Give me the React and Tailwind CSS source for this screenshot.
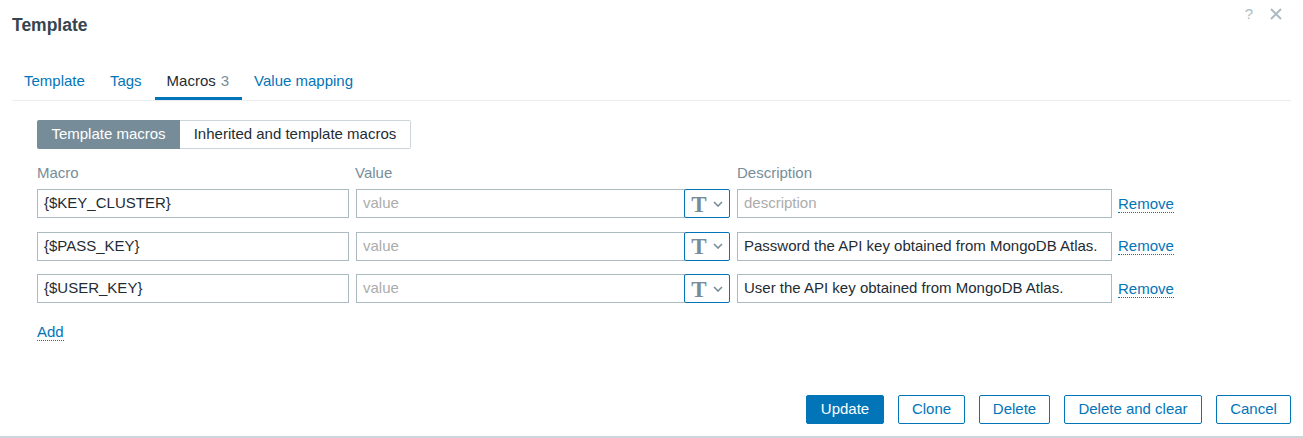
const macros = [
    { macro: '{$KEY_CLUSTER}', description: '' },
    { macro: '{$PASS_KEY}', description: 'Password the API key obtained from MongoDB Atlas.' },
    { macro: '{$USER_KEY}', description: 'User the API key obtained from MongoDB Atlas.' },
];

const tabs = [
    { label: 'Template' },
    { label: 'Tags' },
    { label: 'Macros', count: 3, active: true },
    { label: 'Value mapping' },
];

const buttons = [
    { label: 'Update', w: 'w-[78px]', primary: true },
    { label: 'Clone', w: 'w-[67px]' },
    { label: 'Delete', w: 'w-[71px]' },
    { label: 'Delete and clear', w: 'w-[138px]' },
    { label: 'Cancel', w: 'w-[75px]' },
];

const MacroRow = ({ row }) => {
    return (
        <div className="flex items-center h-[29px]">
            <div className="w-[312px] h-full border border-[#acbbc2] px-[6px] flex items-center">
                {row.macro}
            </div>

            <div className="ml-[7px] w-[329px] h-full border border-[#acbbc2] px-[6px] flex items-center text-[#acacac]">
                value
            </div>
            <button className="-ml-px w-[46px] h-full border border-[#0275b8] rounded-[2px] flex items-center justify-center gap-[6px] bg-white">
                <span className="font-['Liberation_Serif',serif] font-bold text-[23px] leading-none text-[#768d99] mt-[1px]">
                    T
                </span>
                <svg width="10" height="6" viewBox="0 0 10 6" fill="none">
                    <path d="M1 1l4 4 4-4" stroke="#768d99" strokeWidth="1.6" />
                </svg>
            </button>

            <div
                className={`ml-[7px] w-[375px] h-full border border-[#acbbc2] px-[6px] flex items-center ${
                    row.description ? '' : 'text-[#acacac]'
                }`}
            >
                {row.description || 'description'}
            </div>

            <span className="ml-[6px] text-[#0275b8] leading-[17px] border-b border-dotted border-[#0275b8] cursor-pointer">
                Remove
            </span>
        </div>
    );
};

export default function App() {
    return (
        <div className="w-[1303px] h-[438px] bg-white flex flex-col border-b-2 border-[#ccd5d9] font-['Liberation_Sans',Arial,sans-serif] text-[15px] text-[#1f2c33]">
            {/* header */}
            <div className="flex justify-between px-3">
                <h4 className="pt-[14px] font-bold text-[17.5px] leading-[22px] text-[#34454f]">Template</h4>
                <div className="flex items-start gap-[17px] pt-[6px] pr-[9px] text-[#acbbc2]">
                    <span className="text-[15px] leading-[16px]">?</span>
                    <svg width="12" height="12" viewBox="0 0 12 12" className="mt-[2px]">
                        <path d="M1 1l10 10M11 1L1 11" stroke="#acbbc2" strokeWidth="2" />
                    </svg>
                </div>
            </div>

            {/* tabs */}
            <div className="mx-3 mt-[25px] flex border-b border-[#ebeef0]">
                {tabs.map((tab) => (
                    <div
                        key={tab.label}
                        className={`h-[39px] pt-[4px] pl-3 pr-[13px] flex items-center border-b-[3px] ${
                            tab.active
                                ? 'border-[#0275b8] text-[#1f2c33]'
                                : 'border-transparent text-[#0275b8]'
                        }`}
                    >
                        {tab.label}
                        {tab.count && <span className="ml-[5px] text-[#768d99]">{tab.count}</span>}
                    </div>
                ))}
            </div>

            {/* body */}
            <div className="px-[37px] pt-[19px]">
                <div className="flex h-[29px]">
                    <div className="w-[143px] flex items-center justify-center bg-[#768d99] text-white rounded-l-[2px]">
                        Template macros
                    </div>
                    <div className="w-[231px] flex items-center justify-center border border-l-0 border-[#ccd5d9] rounded-r-[2px]">
                        Inherited and template macros
                    </div>
                </div>

                <div className="flex mt-[15px] leading-[18px] text-[#768d99]">
                    <span className="w-[318px]">Macro</span>
                    <span className="w-[382px]">Value</span>
                    <span>Description</span>
                </div>

                <div className="mt-[7px] flex flex-col gap-[13.5px]">
                    {macros.map((row) => (
                        <MacroRow key={row.macro} row={row} />
                    ))}
                </div>

                <div className="mt-[18px]">
                    <span className="text-[#0275b8] leading-[17px] border-b border-dotted border-[#0275b8] cursor-pointer">
                        Add
                    </span>
                </div>
            </div>

            {/* footer */}
            <div className="mt-auto flex justify-end gap-[14px] pr-[12px] pb-[12px]">
                {buttons.map((b) => (
                    <button
                        key={b.label}
                        className={`${b.w} h-[29px] rounded-[2px] border border-[#0275b8] ${
                            b.primary ? 'bg-[#0275b8] text-white' : 'bg-white text-[#0275b8]'
                        }`}
                    >
                        {b.label}
                    </button>
                ))}
            </div>
        </div>
    );
}
